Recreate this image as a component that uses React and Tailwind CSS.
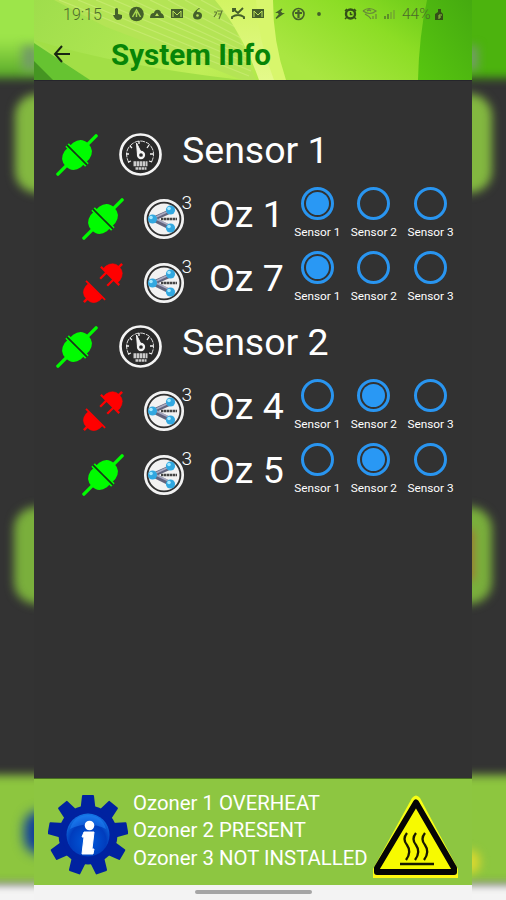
import { clsx } from "clsx";

const rows = [
  { type: "sensor", name: "Sensor 1", connected: true },
  { type: "oz", name: "Oz 1", connected: true, sensor: 1 },
  { type: "oz", name: "Oz 7", connected: false, sensor: 1 },
  { type: "sensor", name: "Sensor 2", connected: true },
  { type: "oz", name: "Oz 4", connected: false, sensor: 2 },
  { type: "oz", name: "Oz 5", connected: true, sensor: 2 },
];

const HeaderArt = () => (
  <svg className="absolute inset-0 h-full w-full" viewBox="0 0 438 80" preserveAspectRatio="none">
    <defs>
      <linearGradient id="base" x1="0" x2="1" y1="0" y2="0.15">
        <stop offset="0" stopColor="#9fdd4c" />
        <stop offset="0.35" stopColor="#b0e852" />
        <stop offset="0.5" stopColor="#c0ee58" />
        <stop offset="1" stopColor="#8cdd28" />
      </linearGradient>
      <linearGradient id="sweep" x1="0" x2="1" y1="0.6" y2="0">
        <stop offset="0" stopColor="#aae642" />
        <stop offset="0.5" stopColor="#8cdd25" />
        <stop offset="1" stopColor="#5dc213" />
      </linearGradient>
      <linearGradient id="edge" x1="0" x2="1" y1="1" y2="0">
        <stop offset="0" stopColor="#58c610" />
        <stop offset="1" stopColor="#45aa10" />
      </linearGradient>
      <linearGradient id="glow" x1="0" x2="0" y1="0" y2="1">
        <stop offset="0" stopColor="#d2f462" />
        <stop offset="1" stopColor="#e4f98a" />
      </linearGradient>
    </defs>
    <rect width="438" height="80" fill="url(#base)" />
    <path d="M20 0H190L222 80H208Q120 45 72 27Z" fill="#b4e455" />
    <g stroke="#cfee7c" strokeWidth="1.2" opacity="0.6">
      <path d="M25 0L215 76M44 0L217 71M62 0L214 63M80 0L213 57M98 0L211 52M116 0L209 45M134 0L207 38M151 0L205 29M167 0L202 19" />
    </g>
    <path d="M181 0H224Q227 44 253 80H225Q208 32 181 0Z" fill="url(#glow)" />
    <path d="M272 0H438V80H285Q272 42 272 0Z" fill="url(#sweep)" />
    <path d="M224 0H438V80H286V80H251Q229 42 224 0Z" fill="none" />
    <path d="M238 0H438V80H251Q238 42 238 0Z" fill="url(#sweep)" />
    <path d="M222 0H239Q239 42 252 80H240Q224 40 222 0Z" fill="#d8f66c" />
    <path d="M393 0H438V80H384Q385 36 393 0Z" fill="url(#edge)" />
    <path d="M0 40Q85 66 208 80H55Z" fill="#a2df46" />
    <path d="M0 43L56 80H0Z" fill="#66c331" />
    <path d="M0 61L19 80H0Z" fill="#459522" />
  </svg>
);

const StatusBar = () => (
  <div className="relative h-7 pl-[29px] pr-[25px] text-[#4c6b2b]">
    <div className="flex h-7 items-center text-[16px] leading-none">
      <span className="w-[48px] pt-0.5 font-light">19:15</span>
      <svg className="h-5 w-[214px] shrink-0" viewBox="111 4 214 20" fill="#44602a">
        <path d="M115 9q2-2 3 0v5l4 1v3q-1 2-4 2-3 0-5-5l2 0z" />
        <circle cx="136.500" cy="14" r="7.300" />
        <path d="m132.500 17 4-7 4 7M136.500 12v5" fill="none" stroke="#a8d650" strokeWidth="1.500" />
        <path d="M150 18q0-5 4-5 1-4 5-3 2 1 2 3 3 1 3 5z" />
        <path d="m155 16 2-3 2 3z" fill="#bce35c" />
        <path d="M171 9h12v9h-12z" />
        <path d="M173 17v-6l4 4 4-4v6" fill="none" stroke="#bce35c" />
        <path d="M199 8q-6 4-6 7.500 0 4 4.500 4t4.500-4-5-3.500q0-3 3-3z" />
        <circle cx="197.500" cy="15.500" r="1.300" fill="#bce35c" />
        <path d="M214 12h2q1 0 0 2l-2 3m3-6h5l-3 8m-1-5h3" fill="none" stroke="#617a34" strokeWidth="1.200" />
        <path d="m233 9 5 4 5-5m-10 4V9h3M232 19v-2q6-4 12 0v2" fill="none" stroke="#44602a" strokeWidth="1.900" />
        <path d="M252 9h12v9h-12z" />
        <path d="M254 17v-6l4 4 4-4v6" fill="none" stroke="#bce35c" />
        <path d="m282 9-5 3.500h4l-5 6 7-5h-4z" stroke="#44602a" strokeWidth="1.200" />
        <circle cx="298.500" cy="14" r="5.500" fill="none" stroke="#44602a" strokeWidth="1.600" />
        <path d="M295 13h7m-3.500-3v8" stroke="#44602a" strokeWidth="2.200" />
        <circle cx="319" cy="14" r="1.900" />
      </svg>
      <svg className="ml-[18px] h-5 w-[54px] shrink-0" viewBox="343 4 54 20" fill="none">
        <circle cx="350.500" cy="14" r="4.500" stroke="#344f18" strokeWidth="2.400" />
        <path d="m345 11 2-2m7 0 2 2m-9 6-2 2m9-2 2 2m-5.500-7v2.500h2" stroke="#344f18" strokeWidth="1.500" />
        <g stroke="#67883a" strokeWidth="1.200">
          <path d="M363 11q6-5 13 0q-6 5-13 0M365 14q4 2 6 5M367 11q2-2 4 0M373 19v-3m3 3v-5" />
        </g>
        <path d="M385 19v-3m3 3v-5" stroke="#50752d" strokeWidth="1.500" />
        <path d="M391 19v-7m3 7v-9" stroke="#73a832" strokeWidth="1.500" />
      </svg>
      <span className="ml-[5px] w-[31px] pt-0.5 text-[15.5px] font-light">44%</span>
      <svg className="h-5 w-3 shrink-0" viewBox="0 0 12 20" fill="#344f18">
        <path d="M5 5h3v3l2 2v6H2v-6l3-2z" />
        <path d="M6 15v-4h3M6 13h2" fill="none" stroke="#8cc63f" />
      </svg>
    </div>
  </div>
);

const PlugIcon = ({ connected }) =>
  connected ? (
    <svg className="h-[42px] w-[42px] shrink-0" viewBox="0 0 42 42">
      <g transform="rotate(-45 21 21)">
        <path d="M-6 21H48" stroke="#00fc00" strokeWidth="3.400" strokeLinecap="round" />
        <path d="M20 9.500h-5q-10 2-10 11.500t10 11.500h5zM22 9.500h5q10 2 10 11.500t-10 11.500h-5z" fill="#00fc00" />
        <path d="M19.500 7v28M22.500 7v28" stroke="#00fc00" strokeWidth="2" />
        <path d="M21 7v28" stroke="#153b17" strokeWidth="1.500" />
      </g>
    </svg>
  ) : (
    <svg className="h-[42px] w-[42px] shrink-0" viewBox="0 0 42 42">
      <g transform="rotate(-45 21 21)" fill="#ff0000" stroke="#ff0000">
        <path d="M-6 21H1M41 21h7" strokeWidth="2.500" />
        <path d="M10 11H7Q-2 12-2 21t9 10h3z" strokeWidth="0.500" />
        <path d="M10.500 7.500v27" strokeWidth="1.800" />
        <path d="M31 11h4q9 2 9 10t-9 10h-4z" strokeWidth="0.500" />
        <path d="M31 8v26M31 16h-9M31 26h-9" strokeWidth="2.200" fill="none" />
      </g>
    </svg>
  );

const GaugeIcon = () => (
  <svg className="h-[44px] w-[44px] shrink-0" viewBox="0 0 44 44" fill="none" stroke="#f4f4f4">
    <circle cx="22.500" cy="21.500" r="20" fill="#292929" strokeWidth="2.700" />
    <path d="M11 30Q5 18 14 11q8-6 17 0 8 8 2 19" strokeWidth="0.900" strokeDasharray="5 1" />
    <path d="m10 29 3-1M8 21h3m1-8 2 2m7-7v3m10 1-2 3m6 6h-3m2 8-3-1" strokeWidth="1.300" />
    <path d="m18.500 10 1 12 4-2z" fill="#f4f4f4" strokeWidth="1" />
    <circle cx="23" cy="22" r="3" fill="#292929" strokeWidth="2.300" />
    <path d="M15.500 29.500h14M15.500 32h14M17.500 35.500h11" strokeWidth="2.700" strokeDasharray="2.600 0.500" opacity="0.8" />
  </svg>
);

const OzoneIcon = () => (
  <div className="relative h-[42px] w-[42px] shrink-0">
    <svg className="h-full w-full" viewBox="0 0 42 42">
      <circle cx="21" cy="21" r="18.700" fill="#303030" stroke="#f2f2f2" strokeWidth="2.700" />
      <circle cx="21" cy="21" r="15.500" fill="#f2f2f2" />
      <path d="m28 13-18 8 18 9" fill="none" stroke="#62647d" strokeWidth="4.500" />
      <path d="m28 12-17 8 17 8" fill="none" stroke="#a9aac2" strokeWidth="1.700" />
      <circle cx="27.500" cy="12" r="4.600" fill="#32a8e0" />
      <circle cx="9.500" cy="21" r="4.600" fill="#32a8e0" />
      <circle cx="27.500" cy="30" r="4.600" fill="#32a8e0" />
      <g fill="#a5e9ff"><circle cx="26" cy="10.500" r="1.800" /><circle cx="8" cy="19.500" r="1.800" /><circle cx="26" cy="28.500" r="1.800" /></g>
      <path d="M18 21h16" stroke="#444" strokeWidth="2.600" strokeDasharray="2.500 0.500" />
    </svg>
    <span className="absolute -right-[7px] -top-[5px] text-[19px] font-light leading-none">3</span>
  </div>
);

const SensorRadio = ({ number, checked }) => (
  <div className="flex w-[56.6px] flex-col items-center">
    <div className="flex h-[33px] w-[33px] items-center justify-center rounded-full border-[3px] border-[#2995f0]">
      {checked && <div className="h-[23px] w-[23px] rounded-full bg-[#2998f4]" />}
    </div>
    <span className="mt-[5px] whitespace-nowrap text-[11.8px] leading-[14px]">Sensor {number}</span>
  </div>
);

const DeviceRow = ({ row }) => {
  const isSensor = row.type === "sensor";
  return (
    <div className={clsx("flex h-16 items-center", isSensor ? "pl-[22px]" : "pl-[48px]")}>
      <PlugIcon connected={row.connected} />
      <div className={isSensor ? "ml-[20px]" : "ml-[19px]"}>
        {isSensor ? <GaugeIcon /> : <OzoneIcon />}
      </div>
      <div className={clsx("whitespace-nowrap pb-[11px] text-[37.5px] leading-[44px]", isSensor ? "ml-[20px]" : "ml-[24px] w-[82px]")}>
        {row.name}
      </div>
      {!isSensor && (
        <div className="-ml-[2px] flex self-start">
          {[1, 2, 3].map((n) => (
            <SensorRadio key={n} number={n} checked={row.sensor === n} />
          ))}
        </div>
      )}
    </div>
  );
};

const GearIcon = () => (
  <svg className="h-[80px] w-[80px] shrink-0" viewBox="0 0 80 80">
    <defs>
      <radialGradient id="ball" cx="0.5" cy="0.65" r="0.65">
        <stop offset="0" stopColor="#005cdc" />
        <stop offset="0.65" stopColor="#003cbd" />
        <stop offset="1" stopColor="#1478e6" />
      </radialGradient>
    </defs>
    <g fill="#0022a0">
      <circle cx="40" cy="40" r="29.500" />
      {[0, 40, 80, 120, 160, 200, 240, 280, 320].map((angle) => (
        <path key={angle} d="M32.500 14 34 1q0-1 1-1h10q1 0 1 1l1.500 13z" transform={`rotate(${angle} 40 40)`} />
      ))}
    </g>
    <circle cx="40" cy="40" r="21.500" fill="url(#ball)" />
    <path d="M22 34q4-14 18-14t18 14q-18-9-36 0z" fill="#268cff" opacity="0.45" />
    <circle cx="41.500" cy="30.500" r="4.800" fill="white" />
    <path d="M36 37h10l-2 17h2l-1 5H34l2-17h-2z" fill="white" stroke="white" strokeWidth="1" strokeLinejoin="round" />
  </svg>
);

const HotSurfaceIcon = () => (
  <svg className="h-[86px] w-[88px] shrink-0" viewBox="0 0 88 86">
    <path d="M40 3q4-5 8 0l38 71v9H1v-9z" fill="#f8ff14" />
    <path d="M44 7.500 82 73v4H5v-4z" fill="#f7fa00" stroke="#050505" strokeWidth="6" strokeLinejoin="round" />
    <path d="M2 81.500h84" stroke="#fff710" strokeWidth="3" />
    <g fill="none" stroke="#181800" strokeWidth="2.300">
      <path d="M35 38q-5 6 0 12 5 7-1 15M44 38q-5 6 0 12 5 7-1 15M53 38q-5 6 0 12 5 7-1 15" />
      <path d="M28 69h34" />
    </g>
  </svg>
);

// Out of focus margins on both sides of the phone screen
const SideBackdrop = ({ right }) => (
  <div className="relative h-full w-[34px] shrink-0 overflow-hidden bg-[#333333]">
    <div
      className={clsx(
        "absolute -left-4 -right-4 -top-5 h-[98px] blur-[5px]",
        right ? "bg-[#4cb30e]" : "bg-linear-to-b from-[#9de54a] from-60% to-[#55a628]"
      )}
    />
    <div className={clsx("absolute top-[46px] h-6 w-4 blur-[5px] bg-[#739d65]", right ? "-left-[10px]" : "-right-[4px]")} />
    <div className={clsx("absolute top-[94px] h-[99px] w-[60px] rounded-[22px] bg-[#83b840] blur-[5px]", right ? "right-[14px]" : "left-[15px]")} />
    <div className={clsx("absolute top-[507px] h-[97px] w-[60px] rounded-[22px] bg-[#7aaf3c] blur-[5px]", right ? "right-[14px]" : "left-[14px]")} />
    {right && <div className="absolute -left-[10px] top-[530px] h-[50px] w-3 bg-[#aa6a2e] opacity-80 blur-[4px]" />}
    <div className="absolute -left-4 -right-4 top-[775px] h-[109px] bg-[#8dc63f] blur-[5px]" />
    {right ? (
      <div className="absolute -left-[12px] top-[850px] h-6 w-5 rounded-full bg-[#d9d82f] blur-[5px]" />
    ) : (
      <div className="absolute -right-[22px] top-[811px] h-[43px] w-8 rounded-full bg-[#103e9d] blur-[6px]" />
    )}
    <div className="absolute -left-4 -right-4 top-[884px] h-10 bg-[#f4f4f4] blur-[4px]" />
  </div>
);

const App = () => {
  return (
    <div className="flex h-[900px] w-[506px] overflow-hidden bg-[#333333] font-['Roboto',sans-serif] text-white">
      <SideBackdrop />
      <div className="flex h-full w-[438px] shrink-0 flex-col bg-[#323232]">
        <header className="relative h-[80px] shrink-0 overflow-hidden">
          <HeaderArt />
          <StatusBar />
          <div className="relative flex h-[52px] items-center pl-[19px]">
            <svg className="h-5 w-5" viewBox="0 0 20 20" fill="none" stroke="#182612" strokeWidth="2">
              <path d="M9 2 2 10l7 8M2 10h15" />
            </svg>
            <h1 className="ml-[38px] pt-[3px] text-[29.6px] font-bold leading-none text-[#078507]">System Info</h1>
          </div>
        </header>

        <main className="flex-1 border-t border-[#25252b] pt-[42px]">
          {rows.map((row) => (
            <DeviceRow key={row.name} row={row} />
          ))}
        </main>

        <footer className="flex h-[107px] shrink-0 border-t border-[#477020] bg-[#8dc641] pl-[14px]">
          <div className="pt-[16px]">
            <GearIcon />
          </div>
          <div className="ml-[5px] w-[239px] whitespace-nowrap pt-[11px] text-[20.35px] leading-[27.3px]">
            <p>Ozoner 1 OVERHEAT</p>
            <p>Ozoner 2 PRESENT</p>
            <p>Ozoner 3 NOT INSTALLED</p>
          </div>
          <div className="pt-[16px]">
            <HotSurfaceIcon />
          </div>
        </footer>

        <div className="flex h-[15px] shrink-0 justify-center bg-[#f3f3f3] pt-[5px]">
          <div className="h-[4px] w-[117px] rounded-full bg-[#a5a5a5]" />
        </div>
      </div>
      <SideBackdrop right />
    </div>
  );
};

export default App;
